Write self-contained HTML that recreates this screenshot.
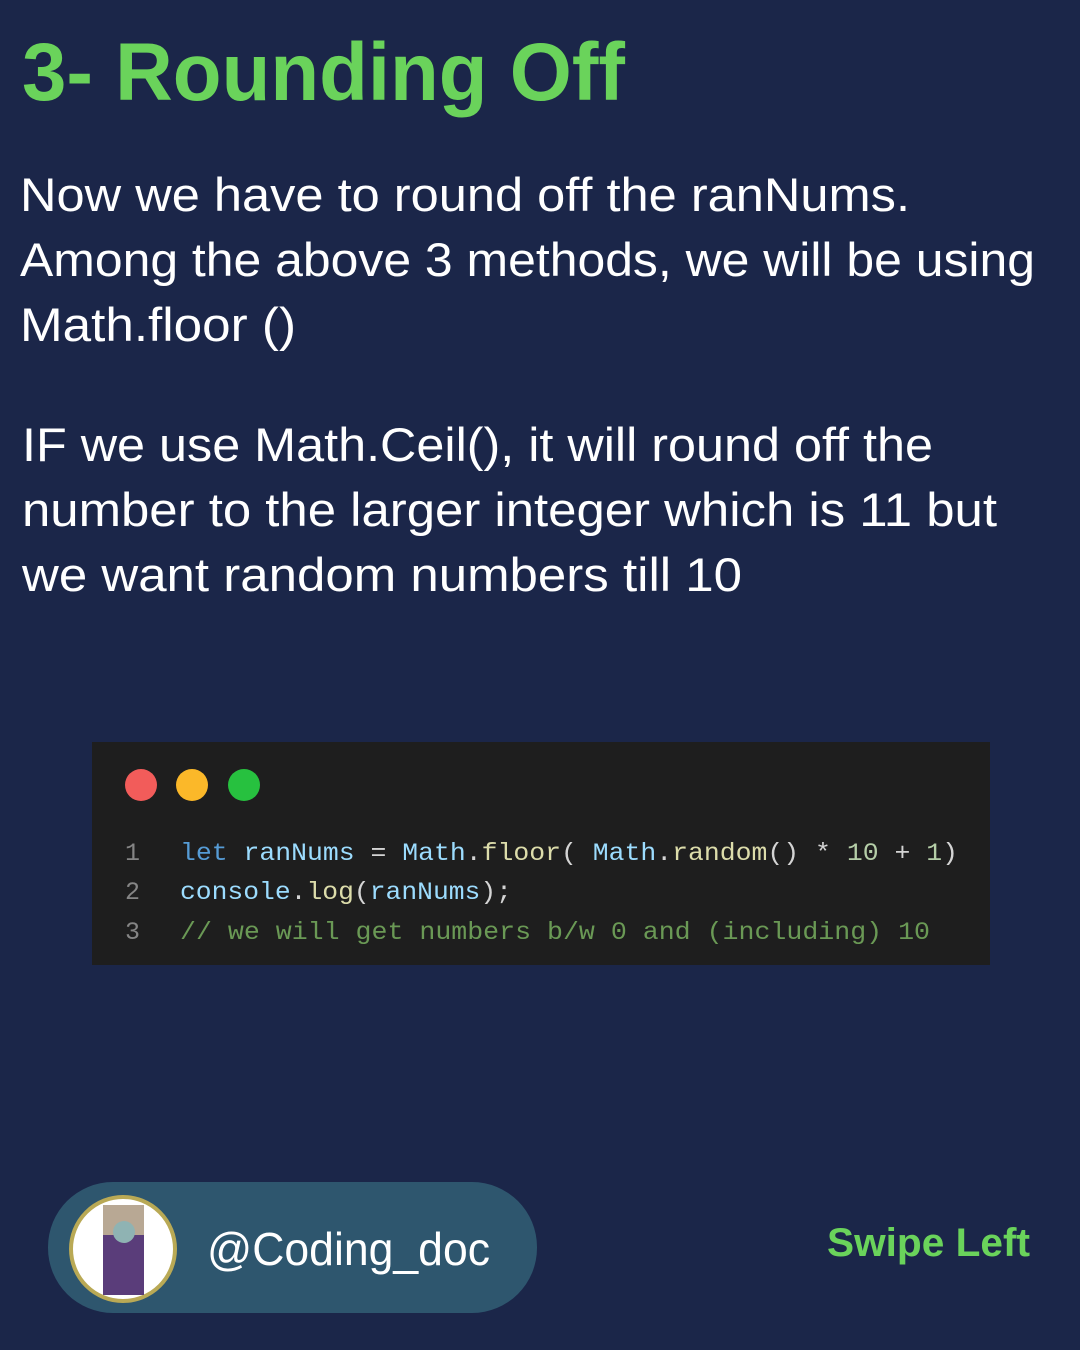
<!DOCTYPE html>
<html><head><meta charset="utf-8"><style>
html,body{margin:0;padding:0;background:#1b2649;}
svg{display:block}
</style></head><body>
<svg width="1080" height="1350" viewBox="0 0 1080 1350" xmlns="http://www.w3.org/2000/svg">
<rect width="1080" height="1350" fill="#1b2649"/>
<text x="22" y="100" font-family="Liberation Sans, sans-serif" font-weight="bold" font-size="82" fill="#6ad35b" textLength="603" lengthAdjust="spacingAndGlyphs">3- Rounding Off</text>
<g font-family="Liberation Sans, sans-serif" font-size="47" fill="#ffffff">
<text x="20" y="211" textLength="890" lengthAdjust="spacingAndGlyphs">Now we have to round off the ranNums.</text>
<text x="20" y="276" textLength="1015" lengthAdjust="spacingAndGlyphs">Among the above 3 methods, we will be using</text>
<text x="20" y="341" textLength="276" lengthAdjust="spacingAndGlyphs">Math.floor ()</text>
<text x="22" y="461" textLength="911" lengthAdjust="spacingAndGlyphs">IF we use Math.Ceil(), it will round off the</text>
<text x="22" y="526" textLength="975" lengthAdjust="spacingAndGlyphs">number to the larger integer which is 11 but</text>
<text x="22" y="591" textLength="720" lengthAdjust="spacingAndGlyphs">we want random numbers till 10</text>
</g>
<rect x="92" y="742" width="898" height="223" fill="#1e1e1e"/>
<circle cx="141" cy="785" r="16" fill="#f25c5a"/>
<circle cx="192" cy="785" r="16" fill="#fbb829"/>
<circle cx="244" cy="785" r="16" fill="#27c13f"/>
<g font-family="Liberation Mono, monospace" font-size="25">
<text x="125" y="860" fill="#858585">1</text>
<text x="125" y="899" fill="#858585">2</text>
<text x="125" y="939" fill="#858585">3</text>
<text x="180" y="860" textLength="778" lengthAdjust="spacingAndGlyphs"><tspan fill="#569cd6">let</tspan><tspan fill="#9cdcfe"> ranNums</tspan><tspan fill="#d4d4d4"> = </tspan><tspan fill="#9cdcfe">Math</tspan><tspan fill="#d4d4d4">.</tspan><tspan fill="#dcdcaa">floor</tspan><tspan fill="#d4d4d4">( </tspan><tspan fill="#9cdcfe">Math</tspan><tspan fill="#d4d4d4">.</tspan><tspan fill="#dcdcaa">random</tspan><tspan fill="#d4d4d4">() * </tspan><tspan fill="#b5cea8">10</tspan><tspan fill="#d4d4d4"> + </tspan><tspan fill="#b5cea8">1</tspan><tspan fill="#d4d4d4">)</tspan></text>
<text x="180" y="899" textLength="332" lengthAdjust="spacingAndGlyphs"><tspan fill="#9cdcfe">console</tspan><tspan fill="#d4d4d4">.</tspan><tspan fill="#dcdcaa">log</tspan><tspan fill="#d4d4d4">(</tspan><tspan fill="#9cdcfe">ranNums</tspan><tspan fill="#d4d4d4">);</tspan></text>
<text x="180" y="939" fill="#6a9955" textLength="750" lengthAdjust="spacingAndGlyphs">// we will get numbers b/w 0 and (including) 10</text>
</g>
<rect x="48" y="1182" width="489" height="131" rx="65" fill="#2e566e"/>
<circle cx="123" cy="1249" r="52" fill="#ffffff" stroke="#b9a955" stroke-width="4"/>
<rect x="103" y="1205" width="41" height="90" fill="#5a3d7a"/>
<rect x="103" y="1205" width="41" height="30" fill="#b8a894"/>
<circle cx="124" cy="1232" r="11" fill="#8fb3b3"/>
<text x="207" y="1265" font-family="Liberation Sans, sans-serif" font-size="46" fill="#ffffff" textLength="283" lengthAdjust="spacingAndGlyphs">@Coding_doc</text>
<text x="827" y="1256" font-family="Liberation Sans, sans-serif" font-weight="bold" font-size="40" fill="#6ad35b" textLength="203" lengthAdjust="spacingAndGlyphs">Swipe Left</text>
</svg>
</body></html>
